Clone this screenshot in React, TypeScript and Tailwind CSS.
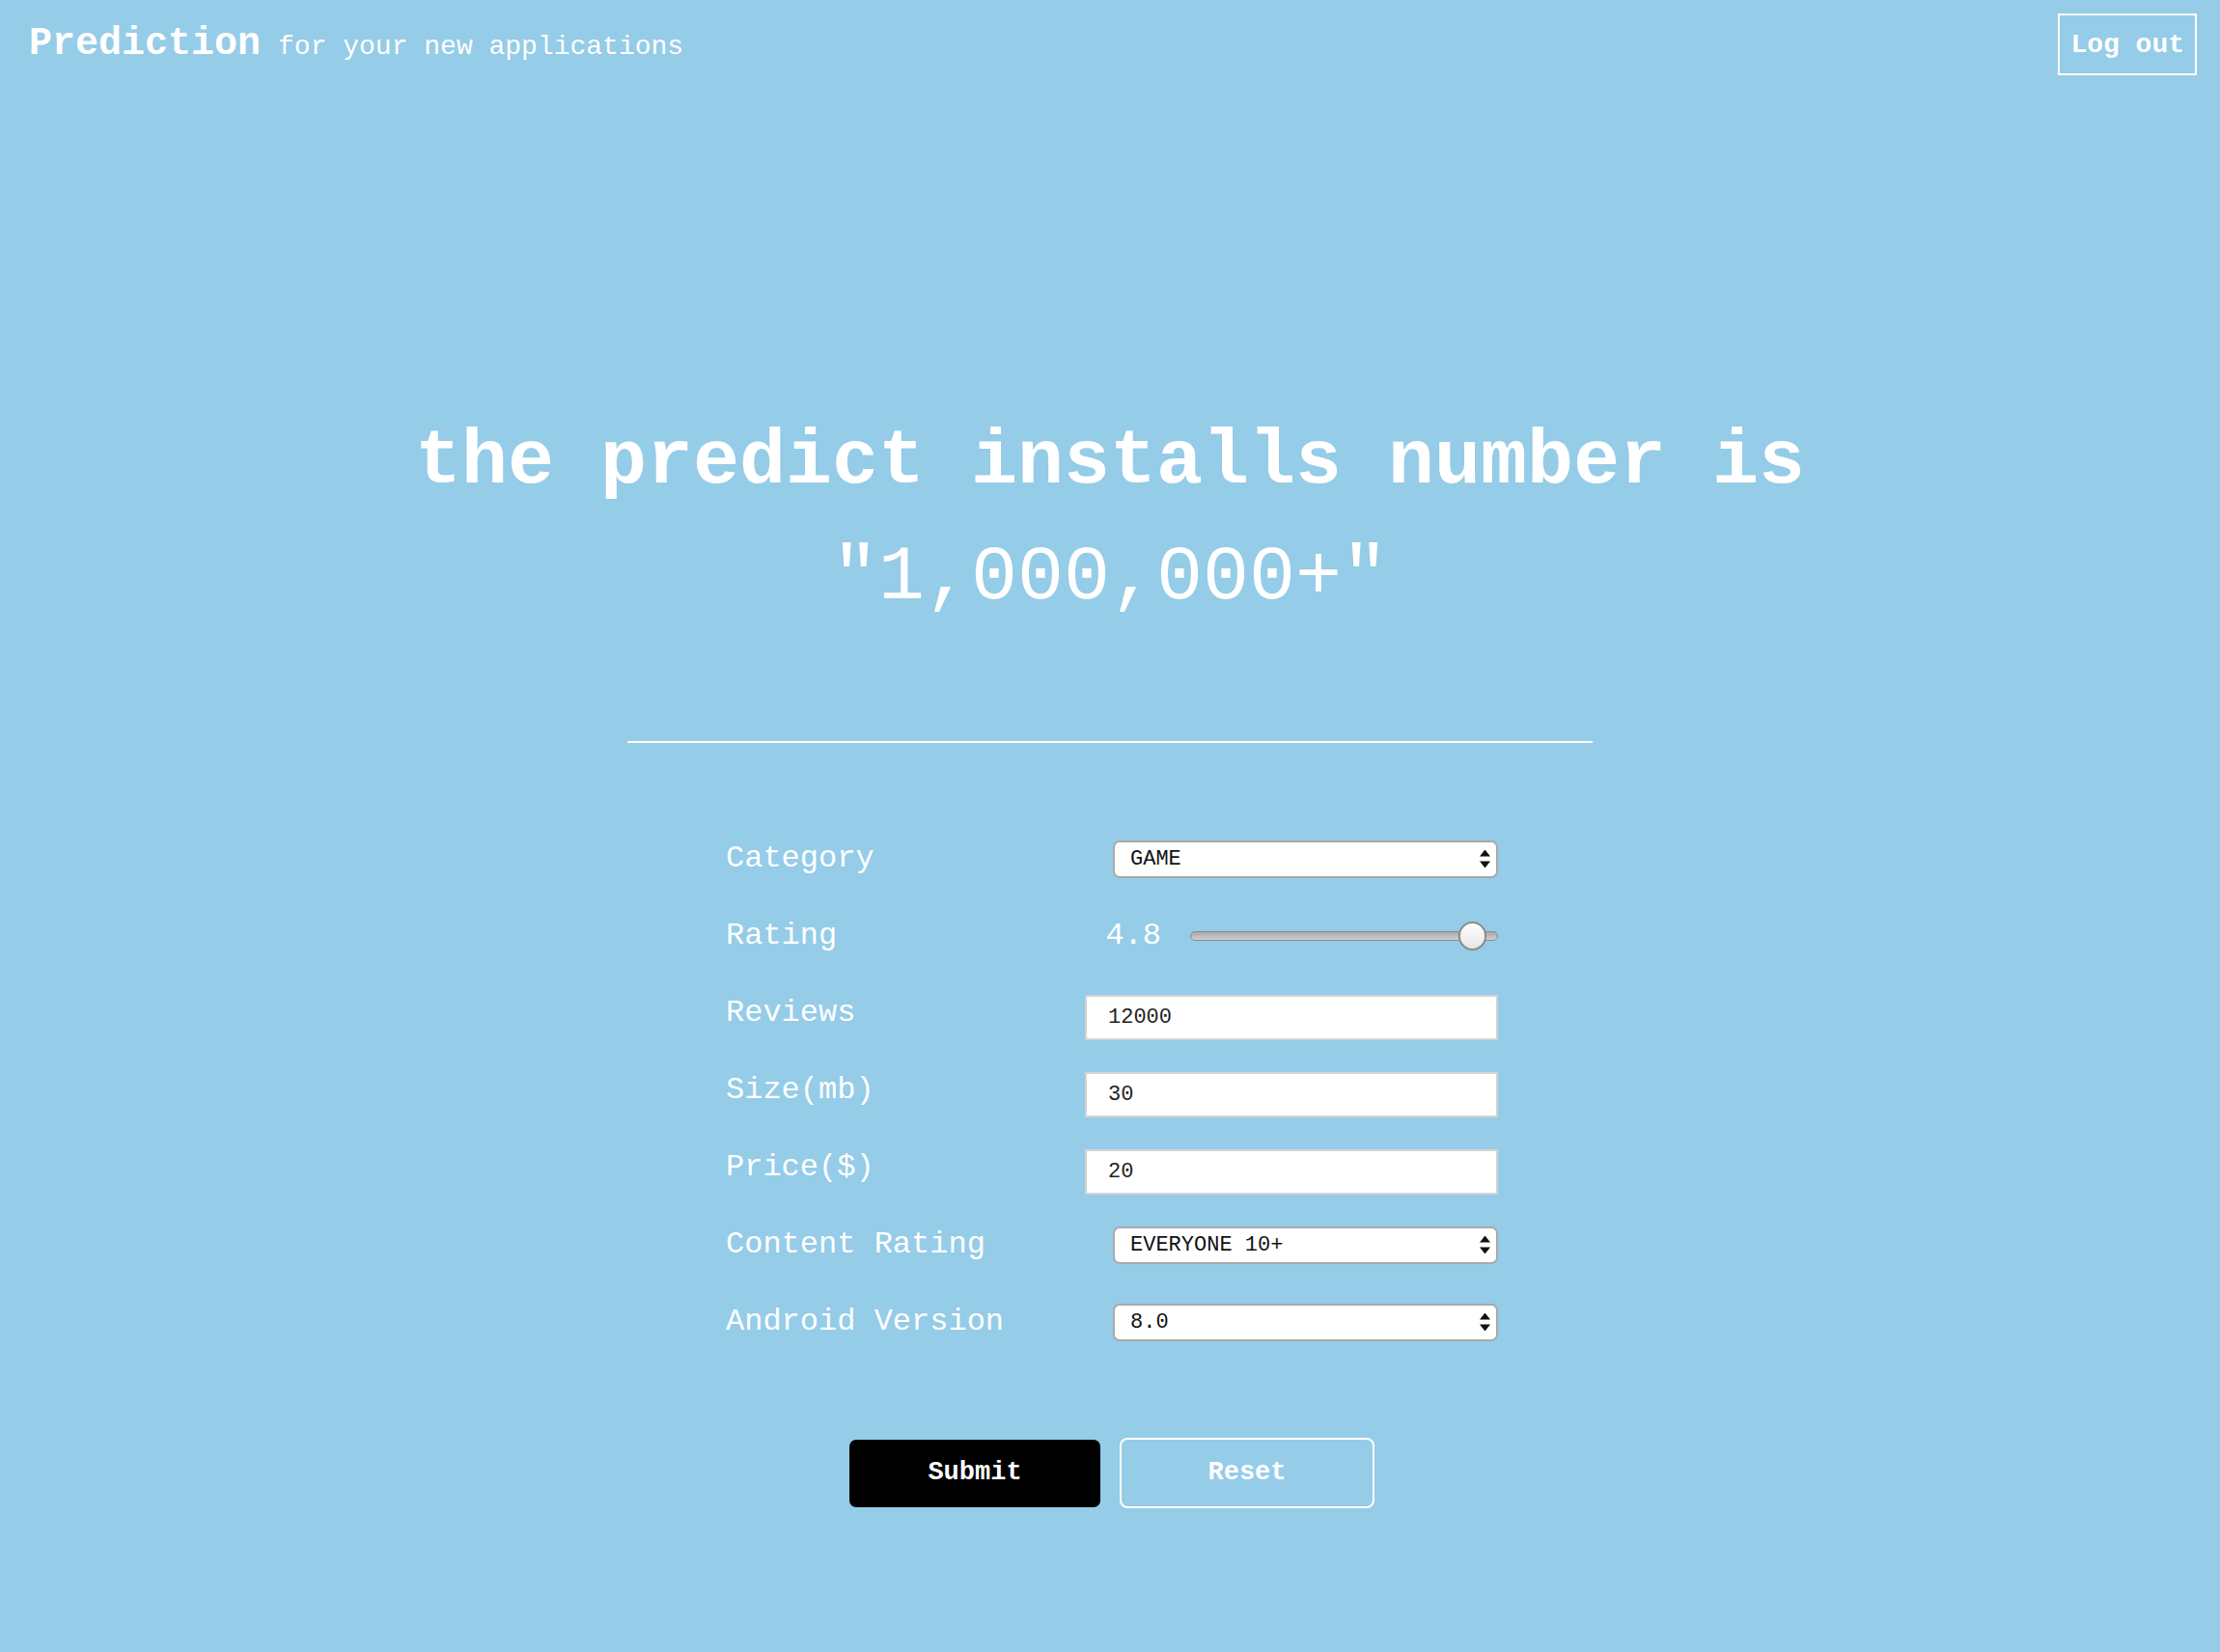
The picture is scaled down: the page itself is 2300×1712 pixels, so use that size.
import React from 'react';

const mono = { fontFamily: '"Courier New", "Liberation Mono", monospace' };

const SelectArrows: React.FC = () => (
  <svg className="pointer-events-none absolute right-[8px] top-1/2 -translate-y-1/2" width="11" height="19" viewBox="0 0 11 19">
    <path d="M5.5 0 L11 7 L0 7 Z" fill="#111" />
    <path d="M0 12 L11 12 L5.5 19 Z" fill="#111" />
  </svg>
);

const Select: React.FC<{ value: string; options: string[] }> = ({ value, options }) => (
  <div className="relative w-[399px] h-[39px]">
    <select
      defaultValue={value}
      className="w-full h-full appearance-none bg-white rounded-[7px] border-2 border-[#a9a9a9] pl-[16px] text-[22px] text-[#111] outline-none"
      style={mono}
    >
      {options.map((o) => (
        <option key={o} value={o}>
          {o}
        </option>
      ))}
    </select>
    <SelectArrows />
  </div>
);

const TextInput: React.FC<{ value: string }> = ({ value }) => (
  <input
    type="text"
    defaultValue={value}
    className="mt-2 w-[428px] h-[47px] bg-white border-2 border-[#d3d3d3] pl-[22px] text-[22px] text-[#222] outline-none"
    style={mono}
  />
);

// slider drawn by hand so it looks like the old webkit one (range 0..5)
const RatingSlider: React.FC<{ value: number }> = ({ value }) => {
  const left = (value / 5) * (319 - 29);
  return (
    <div className="relative w-[319px] h-[30px] flex items-center">
      <div className="w-full h-[10px] rounded-full border border-[#8a8a8a] bg-gradient-to-b from-[#a9a9a9] to-[#cfcfcf]" />
      <div
        className="absolute top-0 w-[29px] h-[30px] rounded-full border-2 border-[#8c8c8c] bg-gradient-to-b from-white to-[#e6e6e6]"
        style={{ left: `${left}px` }}
      />
    </div>
  );
};

const Row: React.FC<{ label: string; children: React.ReactNode }> = ({ label, children }) => (
  <div className="h-[80px] flex items-center justify-between">
    <span className="text-[32px] text-white">{label}</span>
    <div className="flex items-center justify-end">{children}</div>
  </div>
);

export default function App() {
  return (
    <div className="min-h-screen bg-[#95cce8] text-white pb-[150px]" style={mono}>
      <header className="flex justify-between items-start pt-[14px] px-[24px]">
        <div className="flex items-baseline ml-[6px] mt-[8px] leading-[48px]">
          <span className="text-[40px] font-bold">Prediction</span>
          <span className="text-[28px] ml-[18px]">for your new applications</span>
        </div>
        <button className="h-[64px] px-[11px] border-2 border-white text-[28px] font-bold flex items-center pt-[2px]" style={mono}>
          Log out
        </button>
      </header>

      <section className="mt-[341px] text-center">
        <h1 className="text-[80px] font-bold leading-[120px]">the predict installs number is</h1>
        <p className="text-[80px] leading-[120px]">"1,000,000+"</p>
      </section>

      <div className="w-[1000px] h-[2px] bg-white mx-auto mt-[109px]" />

      <form className="w-[804px] pl-[4px] mx-auto mt-[80px]" onSubmit={(e) => e.preventDefault()}>
        <Row label="Category">
          <Select value="GAME" options={['GAME', 'FAMILY', 'TOOLS', 'BUSINESS']} />
        </Row>
        <Row label="Rating">
          <span className="text-[32px] mr-[30px]">4.8</span>
          <RatingSlider value={4.8} />
        </Row>
        <Row label="Reviews">
          <TextInput value="12000" />
        </Row>
        <Row label="Size(mb)">
          <TextInput value="30" />
        </Row>
        <Row label="Price($)">
          <TextInput value="20" />
        </Row>
        <Row label="Content Rating">
          <Select value="EVERYONE 10+" options={['EVERYONE', 'EVERYONE 10+', 'TEEN', 'MATURE 17+']} />
        </Row>
        <Row label="Android Version">
          <Select value="8.0" options={['4.0', '5.0', '6.0', '7.0', '8.0']} />
        </Row>

        <div className="mt-[80px] flex items-center justify-center gap-[20px]">
          <button type="submit" className="w-[260px] h-[70px] bg-black rounded-[7px] text-[27px] font-bold text-white" style={mono}>
            Submit
          </button>
          <button type="reset" className="w-[264px] h-[73px] border-2 border-white rounded-[8px] text-[27px] font-bold text-white" style={mono}>
            Reset
          </button>
        </div>
      </form>
    </div>
  );
}
